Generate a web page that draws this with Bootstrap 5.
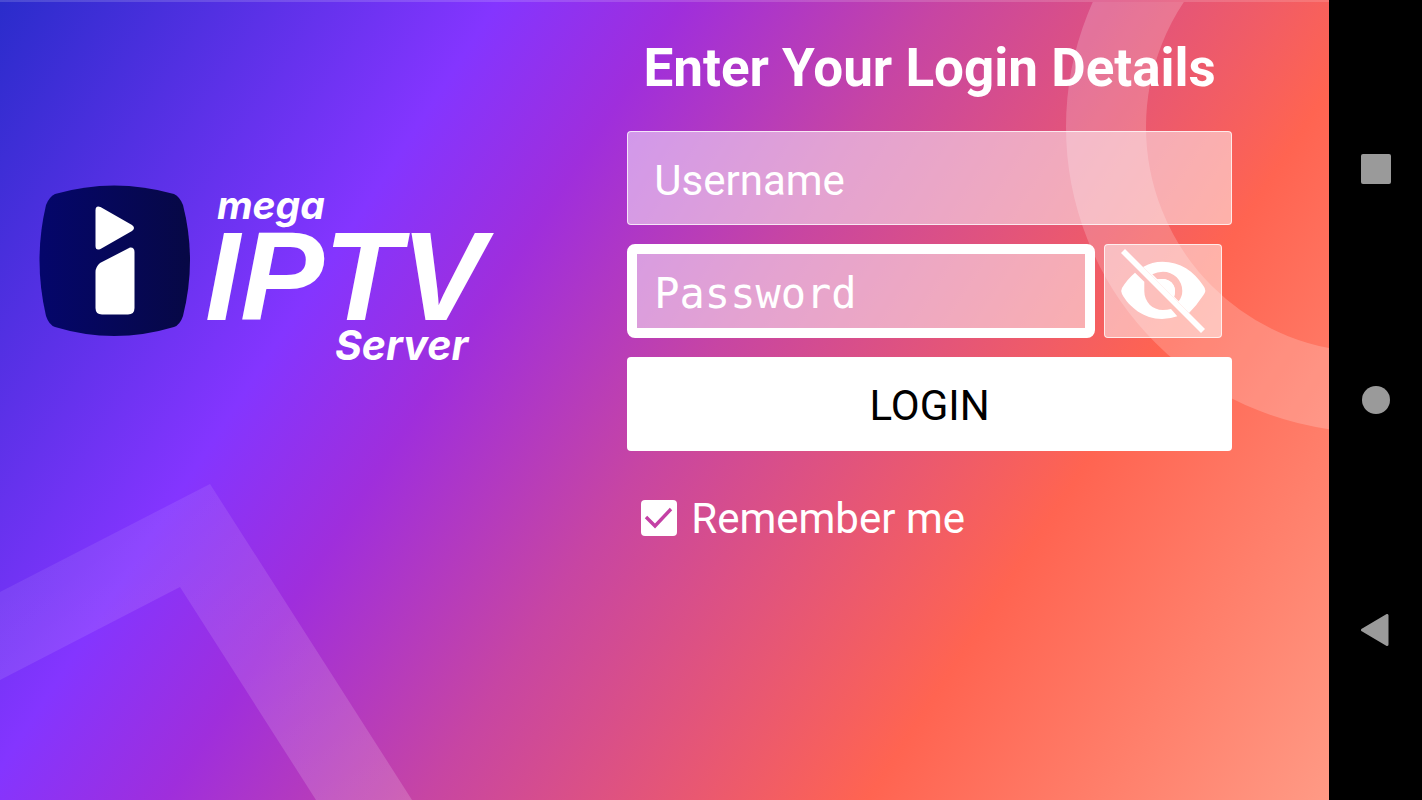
<!DOCTYPE html>
<html lang="en">
<head>
<meta charset="utf-8">
<meta name="viewport" content="width=device-width, initial-scale=1">
<title>Mega IPTV Server - Login</title>
<link href="https://cdn.jsdelivr.net/npm/bootstrap@5.3.0/dist/css/bootstrap.min.css" rel="stylesheet">
<style>
  body { font-family: Roboto, sans-serif; background: #000; }
  .login-screen {
    display: grid;
    grid-template-columns: 47.2% 1fr;
    min-width: 0;
    isolation: isolate;
    border-top: 2px solid rgba(255, 255, 255, .15);
    background: linear-gradient(123deg, #2a2ccb 0%, #8435ff 27%, #9f2edc 37%, #c745a3 51%, #ff6451 75%, #ff9a85 100%) border-box;
  }
  .decor { z-index: -1; }
  .brand { padding: 182px 16px 0 36px; }
  .brand svg { max-width: 456px; overflow: visible; }
  .wordmark { font-family: Inter, sans-serif; font-weight: 700; font-style: italic; fill: #fff; }
  .wordmark-main { font-family: "Liberation Sans", sans-serif; }
  .login-form { padding: 34px 97px 0 0; }
  .login-title { font-size: 53px; line-height: 64px; margin-bottom: 31px; font-weight: 700; }
  .stack { gap: 19px; }
  .field, .field:focus {
    height: 94px;
    color: #fff;
    font-size: 42px;
    padding: 4px 26px 0;
    background: rgba(255, 255, 255, .5);
    border: 1px solid rgba(255, 255, 255, .75);
    border-radius: 4px;
    box-shadow: none;
  }
  .field::placeholder { color: #fff; opacity: 1; }
  .field-active, .field-active:focus {
    font-family: "DejaVu Sans Mono", monospace;
    padding: 4px 17px 0;
    border: 10px solid #fff;
    border-radius: 8px;
    background-clip: padding-box;
  }
  .password-row { gap: 9px; padding-right: 10px; }
  .btn-eye {
    flex: 0 0 118px;
    height: 94px;
    background: rgba(255, 255, 255, .5);
    border: 1px solid rgba(255, 255, 255, .75);
    border-radius: 4px;
  }
  .btn-login, .btn-login:hover { height: 94px; font-size: 42px; background: #fff; color: #000; border-radius: 4px; padding-top: 9px; }
  .remember { margin: 34px 0 0 14px; gap: 14px; font-size: 42px; line-height: 64px; }
  .remember label { padding-top: 2px; }
  .remember .form-check-input {
    width: 36px; height: 36px;
    border: 0; border-radius: 4px;
    background-color: #fff;
  }
  .remember .form-check-input:checked {
    background-image: url("data:image/svg+xml,%3Csvg xmlns='http://www.w3.org/2000/svg' viewBox='0 0 36 36'%3E%3Cpath d='M5 17l9 9L30 9' fill='none' stroke='%23c440a5' stroke-width='3.4'/%3E%3C/svg%3E");
  }
  .system-bar { flex: 0 0 93px; padding: 154px 0; }
  .system-bar svg { display: block; }
</style>
</head>
<body>
<div class="d-flex min-vh-100">
  <main class="login-screen position-relative flex-grow-1">
    <svg class="decor position-absolute top-0 start-0 w-100 h-100" viewBox="0 0 1329 798" preserveAspectRatio="none" aria-hidden="true">
      <defs>
        <linearGradient id="fade" x1="0" y1="0" x2="1" y2="1">
          <stop offset="0" stop-color="#fff" stop-opacity=".06"/>
          <stop offset="1" stop-color="#fff" stop-opacity=".17"/>
        </linearGradient>
      </defs>
      <path d="M0 590 210 482 412 798H316L180 585 0 678Z" fill="url(#fade)"/>
      <circle cx="1371" cy="125" r="265" fill="none" stroke="#fff" stroke-opacity=".2" stroke-width="80"/>
    </svg>

    <div class="brand">
      <svg class="w-100" viewBox="0 0 456 180" role="img" aria-label="mega IPTV Server">
        <defs>
          <linearGradient id="tile"><stop offset="0" stop-color="#04066b"/><stop offset="1" stop-color="#070845"/></linearGradient>
        </defs>
        <path d="M19 10Q78-7 138 10Q144 13 147 21Q161 76 147 132Q144 141 138 143Q78 161 19 143Q13 141 10 132Q-3 76 10 21Q13 13 19 10Z" fill="url(#tile)"/>
        <path d="M59.5 26.5Q59.5 21 64.5 23L96 41Q100 44 96 47L64.5 65Q59.5 67 59.5 62Z" fill="#fff"/>
        <path d="M94 63.5Q98.500 63 98.5 68V124Q98.5 130.5 92 130.5H66Q59.5 130.5 59.5 124V88Q59.5 83 64 79Z" fill="#fff"/>
        <text class="wordmark" x="181" y="35" font-size="39">mega</text>
        <text class="wordmark wordmark-main" x="169" y="136" font-size="126">IPTV</text>
        <text class="wordmark" x="299" y="176" font-size="41">Server</text>
      </svg>
    </div>

    <form class="login-form text-white" onsubmit="return false">
      <h1 class="login-title text-center text-nowrap">Enter Your Login Details</h1>
      <div class="stack d-flex flex-column">
        <input class="form-control field" type="text" placeholder="Username" aria-label="Username">
        <div class="password-row d-flex">
          <input class="form-control field field-active" type="password" placeholder="Password" aria-label="Password">
          <button class="btn btn-eye p-0" type="button" aria-label="Show password">
            <svg class="d-block w-100 h-100" viewBox="1 1 116 92" fill="#fff" aria-hidden="true">
              <path d="M17 9 21 5 101 85 97 89Z"/>
              <path fill-rule="evenodd" d="M39 23Q48 17.7 58.5 17.7C76 17.7 90 27 99.5 42Q103 46.500 99.5 51Q93 61 85 69L39 23Z M48.300 30.300Q53 27.700 59 27.700A19.300 19.300 0 0 1 78.300 47Q78.300 52.500 74.700 57.300L70 52.500Q71 50 71 47Q71 42.500 67.500 38.500Q63.500 35 59 35L53.300 35.300Z"/>
              <path d="M52 35.500Q55 35 59 35Q63.500 35 67.500 38.500Q71 42.500 71 47Q71 50 70 53.500Z"/>
              <path d="M31 28.700 40.300 37.700V47C40.300 58 48.500 66 59 66Q63 66 67 65L73.300 72.300Q66 75 58 75C40 75 25 63 18 50Q16.500 46.500 18 44Q23 35.500 31 28.700Z"/>
            </svg>
          </button>
        </div>
        <button class="btn btn-login w-100" type="submit">LOGIN</button>
      </div>
      <div class="remember form-check p-0 d-flex align-items-center">
        <input class="form-check-input m-0 flex-shrink-0" type="checkbox" id="remember" checked>
        <label class="form-check-label" for="remember">Remember me</label>
      </div>
    </form>
  </main>

  <nav class="system-bar bg-black d-flex flex-column align-items-center justify-content-between" aria-label="System">
    <svg width="30" height="30" fill="#9a9a9a" aria-label="Recent apps" role="img"><rect width="30" height="30" rx="2"/></svg>
    <svg width="30" height="30" fill="#9a9a9a" aria-label="Home" role="img"><circle cx="15" cy="16" r="14"/></svg>
    <svg width="30" height="32" fill="#9a9a9a" stroke="#9a9a9a" stroke-width="3" stroke-linejoin="round" aria-label="Back" role="img"><path d="M1.500 16 26 1.500V30.500Z"/></svg>
  </nav>
</div>
<script src="https://cdn.jsdelivr.net/npm/bootstrap@5.3.0/dist/js/bootstrap.bundle.min.js"></script>
</body>
</html>
